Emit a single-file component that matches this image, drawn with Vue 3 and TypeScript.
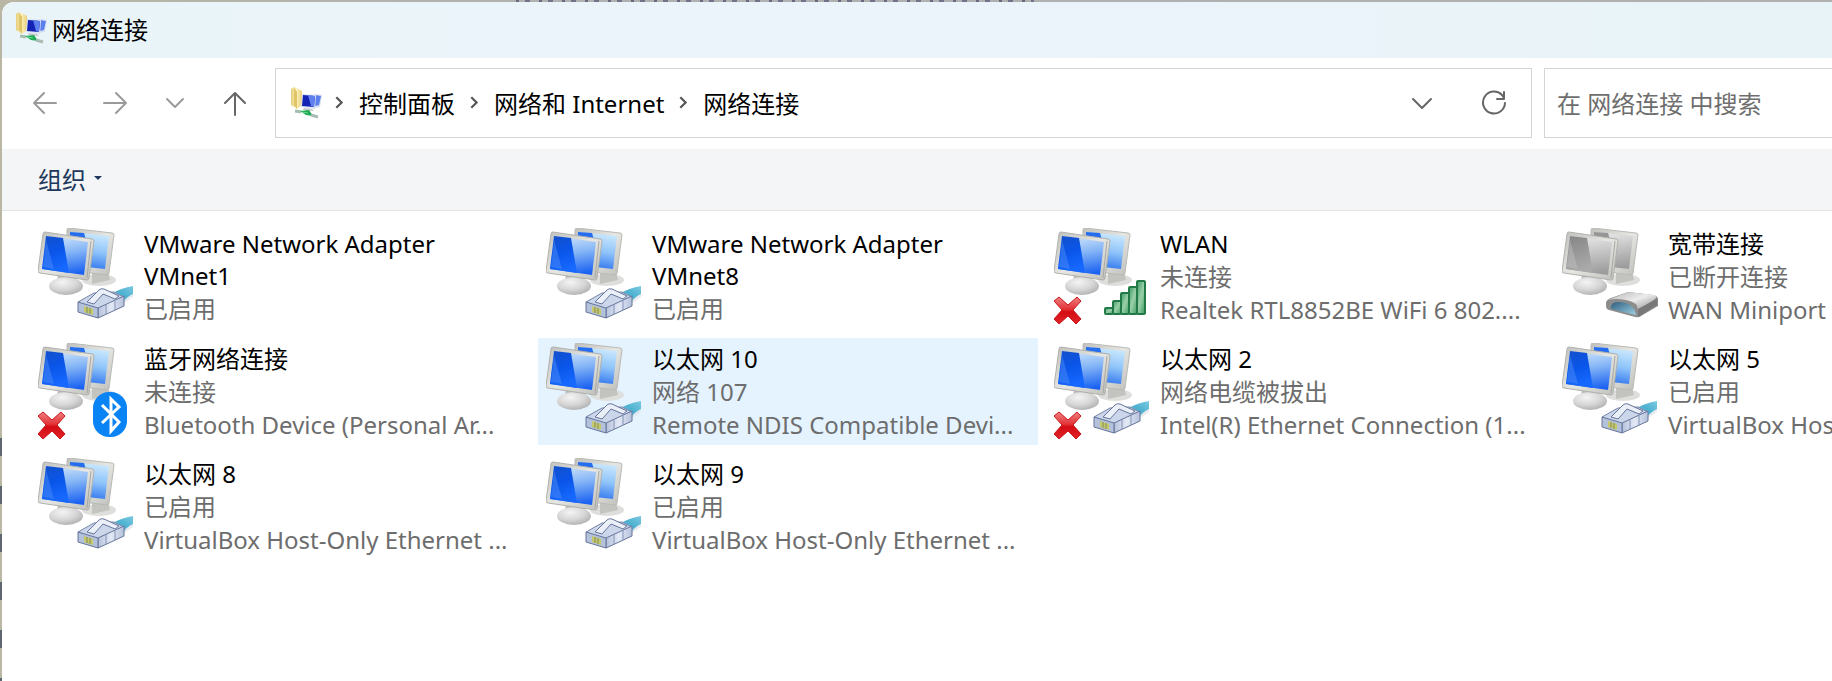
<script setup lang="ts">
type Badge = 'plug' | 'signal' | 'modem' | 'bluetooth'

interface Connection {
  name: string
  status: string
  device?: string
  badge: Badge
  down?: boolean
  grey?: boolean
  hot?: boolean
}

const crumbs: string[] = ['控制面板', '网络和 Internet', '网络连接']

const connections: Connection[] = [
  { name: 'VMware Network Adapter VMnet1', status: '已启用', badge: 'plug' },
  { name: 'VMware Network Adapter VMnet8', status: '已启用', badge: 'plug' },
  { name: 'WLAN', status: '未连接', device: 'Realtek RTL8852BE WiFi 6 802....', badge: 'signal', down: true },
  { name: '宽带连接', status: '已断开连接', device: 'WAN Miniport', badge: 'modem', grey: true },
  { name: '蓝牙网络连接', status: '未连接', device: 'Bluetooth Device (Personal Ar...', badge: 'bluetooth', down: true },
  { name: '以太网 10', status: '网络 107', device: 'Remote NDIS Compatible Devi...', badge: 'plug', hot: true },
  { name: '以太网 2', status: '网络电缆被拔出', device: 'Intel(R) Ethernet Connection (1...', badge: 'plug', down: true },
  { name: '以太网 5', status: '已启用', device: 'VirtualBox Host-Only Ethernet ...', badge: 'plug' },
  { name: '以太网 8', status: '已启用', device: 'VirtualBox Host-Only Ethernet ...', badge: 'plug' },
  { name: '以太网 9', status: '已启用', device: 'VirtualBox Host-Only Ethernet ...', badge: 'plug' },
]
</script>

<template>
  <div class="desktop">
    <svg class="defs" width="0" height="0" aria-hidden="true">
      <defs>
        <linearGradient id="blueDeep" x1="0" y1="0" x2="0.3" y2="1">
          <stop offset="0" stop-color="#1450c8" />
          <stop offset="0.5" stop-color="#0a55e8" />
          <stop offset="1" stop-color="#1668ff" />
        </linearGradient>
        <linearGradient id="blueSheen" x1="0.3" y1="0" x2="0.5" y2="1">
          <stop offset="0" stop-color="#cfe4fb" />
          <stop offset="0.45" stop-color="#86b6f6" />
          <stop offset="1" stop-color="#1c63f2" />
        </linearGradient>
        <linearGradient id="blueBack" x1="0.6" y1="0" x2="0.4" y2="1">
          <stop offset="0" stop-color="#cdeafd" />
          <stop offset="0.5" stop-color="#8fc4fa" />
          <stop offset="1" stop-color="#2f74ee" />
        </linearGradient>
        <linearGradient id="greyDeep" x1="0" y1="0" x2="0.3" y2="1">
          <stop offset="0" stop-color="#858585" />
          <stop offset="1" stop-color="#a9a9a9" />
        </linearGradient>
        <linearGradient id="greySheen" x1="0.3" y1="0" x2="0.5" y2="1">
          <stop offset="0" stop-color="#e9e9e9" />
          <stop offset="1" stop-color="#9c9c9c" />
        </linearGradient>
        <linearGradient id="bezel" x1="0" y1="0" x2="1" y2="1">
          <stop offset="0" stop-color="#bfbfbc" />
          <stop offset="0.5" stop-color="#e6e6e2" />
          <stop offset="1" stop-color="#bdbdba" />
        </linearGradient>
        <radialGradient id="foot" cx="0.4" cy="0.3" r="0.7">
          <stop offset="0" stop-color="#f4f4f4" />
          <stop offset="0.6" stop-color="#d6d6d6" />
          <stop offset="1" stop-color="#b4b4b4" />
        </radialGradient>
        <linearGradient id="cross" x1="0" y1="0" x2="0" y2="1">
          <stop offset="0" stop-color="#f08080" />
          <stop offset="0.45" stop-color="#e33338" />
          <stop offset="0.55" stop-color="#d40b12" />
          <stop offset="1" stop-color="#e0262b" />
        </linearGradient>
        <linearGradient id="bar" x1="0" y1="0" x2="1" y2="1">
          <stop offset="0" stop-color="#3f9a64" />
          <stop offset="0.5" stop-color="#9ad0a8" />
          <stop offset="1" stop-color="#3f9a60" />
        </linearGradient>
        <linearGradient id="cable" x1="0" y1="1" x2="1" y2="0">
          <stop offset="0" stop-color="#b9dcea" />
          <stop offset="0.5" stop-color="#4bb1cf" />
          <stop offset="1" stop-color="#7cc9e2" />
        </linearGradient>
        <linearGradient id="plugSide" x1="0" y1="0" x2="1" y2="0">
          <stop offset="0" stop-color="#b5c1dc" />
          <stop offset="0.5" stop-color="#e3e9f5" />
          <stop offset="1" stop-color="#b5c1dc" />
        </linearGradient>
        <linearGradient id="modemTop" x1="0" y1="0" x2="1" y2="1">
          <stop offset="0" stop-color="#b3b3b3" />
          <stop offset="0.5" stop-color="#ececec" />
          <stop offset="1" stop-color="#8a8a8a" />
        </linearGradient>
        <linearGradient id="modemGlass" x1="0" y1="0" x2="1" y2="1">
          <stop offset="0" stop-color="#2e5d7d" />
          <stop offset="1" stop-color="#9dd0e4" />
        </linearGradient>
        <linearGradient id="folder" x1="0" y1="0" x2="1" y2="0">
          <stop offset="0" stop-color="#e6cd78" />
          <stop offset="0.5" stop-color="#fbf0b8" />
          <stop offset="1" stop-color="#e9d07c" />
        </linearGradient>
        <symbol id="netFolder" viewBox="0 0 32 32">
          <path d="M1 2 4 0l8 4v14l-5 4-6-4z" fill="url(#folder)" />
          <path d="M4 1v17l3 4V5z" fill="#e0c468" />
          <path d="M24 7l8 1-2 12-6 1z" fill="#d4def5" />
          <path d="M25 8l6 1-2 9-4 1z" fill="#5b80ee" />
          <path d="M12 7l14 1-1 14-14-2z" fill="#dbe2f3" />
          <path d="M13 8l12 1-1 11-12-1z" fill="#1423b4" />
          <path d="M18 8l7 1-1 11-3-1z" fill="#5f80ee" />
          <path d="M14 21l8 1 2 2-11-1z" fill="#c7c9cd" />
          <path d="M5 24l6 1" stroke="#a4bfb0" stroke-width="3" />
          <path d="M10 24l9-1 4 6-7-1z" fill="#1fa954" />
          <path d="M12 25l6 1" stroke="#6bdc92" stroke-width="1" />
          <path d="M21 28l7 2" stroke="#a9bdb4" stroke-width="3" />
        </symbol>
      </defs>
    </svg>

    <main class="window">
      <header class="titlebar">
        <svg class="folder-icon" aria-hidden="true"><use href="#netFolder" /></svg>
        <h1>网络连接</h1>
      </header>

      <div class="navbar">
        <div class="history">
          <button type="button" class="faded" aria-label="后退">
            <svg viewBox="0 0 26 26"><path d="M24 13H2M12 3 2 13l10 10" /></svg>
          </button>
          <button type="button" class="faded" aria-label="前进">
            <svg viewBox="0 0 26 26"><path d="M2 13h22M14 3l10 10-10 10" /></svg>
          </button>
          <button type="button" class="faded" aria-label="最近浏览的位置">
            <svg viewBox="0 0 26 26"><path d="M5 9l8 8 8-8" /></svg>
          </button>
          <button type="button" aria-label="上移">
            <svg viewBox="0 0 26 26"><path d="M13 25V3M3 13 13 3l10 10" /></svg>
          </button>
        </div>

        <div class="address">
          <svg class="folder-icon" aria-hidden="true"><use href="#netFolder" /></svg>
          <nav class="crumbs" aria-label="地址">
            <template v-for="crumb in crumbs" :key="crumb">
              <svg class="sep" viewBox="0 0 10 14" aria-hidden="true"><path d="M2 2l5 5-5 5" /></svg>
              <a href="#">{{ crumb }}</a>
            </template>
          </nav>
          <button type="button" aria-label="历史记录">
            <svg viewBox="0 0 26 26"><path d="M4 9l9 9 9-9" /></svg>
          </button>
          <button type="button" aria-label="刷新">
            <svg viewBox="0 0 26 26"><path d="M24 13a11 11 0 1 1-3-8l2 3M23 2v7h-7" /></svg>
          </button>
        </div>

        <input class="search" type="search" placeholder="在 网络连接 中搜索" aria-label="在 网络连接 中搜索" />
      </div>

      <div class="toolbar">
        <button type="button">
          组织
          <svg viewBox="0 0 8 5" aria-hidden="true"><path d="M0 0h8L4 4z" /></svg>
        </button>
      </div>

      <ul class="connections">
        <li v-for="item in connections" :key="item.name">
          <button type="button" class="tile" :class="{ hot: item.hot }">
            <svg class="icon" viewBox="0 0 96 98" aria-hidden="true">
              <ellipse cx="61" cy="52" rx="17" ry="6" fill="#dededc" />
              <path d="M54 42l16 2 2 8-18 4z" fill="#c3c3c0" />
              <path d="M29 2q0-2 2-2l43 5q2 0 2 2l-5 38q0 2-2 2l-40-5z" fill="url(#bezel)" stroke="#b9b9b6" stroke-width="1" />
              <path d="M32 4l39 4-4 33-36-4z" :fill="item.grey ? 'url(#greySheen)' : 'url(#blueBack)'" />
              <path d="M32 4l14 1 6 20-20 8z" :fill="item.grey ? '#969696' : '#256df0'" />
              <path d="M20 46l18 3 3 10H18z" fill="#bcbcba" />
              <ellipse cx="28" cy="58" rx="17" ry="9" fill="url(#foot)" />
              <path d="M5 6q0-2 2-2l47 7q2 0 2 2l-5 37q0 2-2 2L2 45q-2 0-2-2z" fill="url(#bezel)" stroke="#b0b0ad" stroke-width="1" />
              <path d="M53 13l-4 37" stroke="#a8a8a5" stroke-width="1" />
              <path d="M8 8l42 6-4 33-42-6z" :fill="item.grey ? 'url(#greySheen)' : 'url(#blueSheen)'" />
              <path d="M8 8l17 2 6 35-27-4z" :fill="item.grey ? 'url(#greyDeep)' : 'url(#blueDeep)'" />
              <path d="M8 12l8 29-11-2z" :fill="item.grey ? '#bdbdbd' : '#4a8bf8'" opacity="0.5" />

              <g v-if="item.badge === 'plug'" stroke-linejoin="round">
                <path d="M76 70l19-4v3l-20 14z" fill="#dadde2" opacity="0.6" />
                <path d="M73 66q10-6 22-8v8q-5 2-10 8l-6-2z" fill="url(#cable)" />
                <path d="M40 74l16-9 20-1 10 5-26 13z" fill="#ccd6ea" stroke="#7584a8" stroke-width="1" />
                <path d="M60 80l26-12v10L60 90z" fill="url(#plugSide)" stroke="#66759a" stroke-width="1" />
                <path d="M68 77v9M77 73v9" stroke="#8494b8" stroke-width="1" />
                <path d="M40 74l20 6v10l-20-6z" fill="#b4c1da" stroke="#66759a" stroke-width="1" />
                <path d="M46 78l9 3v6l-9-3z" fill="#c6c86c" />
                <path d="M49 79v6M52 80v6" stroke="#7f8b5c" stroke-width="1" />
                <path d="M49 74l12-12q2-2 5-1l15 7-4 3-12-5-9 10z" fill="#eaeff8" stroke="#66759a" stroke-width="1" />
              </g>

              <g v-else-if="item.badge === 'signal'" fill="url(#bar)" stroke="#237a49" stroke-width="2">
                <rect x="51" y="80" width="8" height="6" rx="1" />
                <rect x="59" y="73" width="8" height="13" rx="1" />
                <rect x="67" y="65" width="8" height="21" rx="1" />
                <rect x="75" y="59" width="8" height="27" rx="1" />
                <rect x="83" y="53" width="8" height="33" rx="1" />
              </g>

              <g v-else-if="item.badge === 'modem'" transform="translate(0 -2)">
                <path d="M44 77q0-3 5-5l17-6 25 3q5 1 5 4v7l-17 10q-2 2-6 1l-26-7q-3-1-3-4z" fill="#8d8d8d" />
                <path d="M46 74l20-8 26 3q4 1 1 4L76 84q0-8-12-10-10-2-18 0z" fill="url(#modemTop)" />
                <path d="M49 83q-1-8 9-7 14 1 16 13z" fill="url(#modemGlass)" />
                <path d="M76 83v8l19-12v-6z" fill="#777" />
              </g>

              <g v-else-if="item.badge === 'bluetooth'">
                <rect x="55" y="49" width="34" height="45" rx="16" fill="#0a84f5" />
                <path d="M64 62l17 17-8 9V56l8 8-17 16" fill="none" stroke="#fff" stroke-width="3" />
              </g>

              <path v-if="item.down" d="M5 69l9 8 9-8 4 4-8 9 8 9-5 5-8-8-9 8-5-5 8-9-8-9z" fill="url(#cross)" stroke="#c9181d" stroke-width="1" stroke-linejoin="round" />
            </svg>
            <span class="text">
              <span class="name">{{ item.name }}</span>
              <span class="line">{{ item.status }}</span>
              <span v-if="item.device" class="line">{{ item.device }}</span>
            </span>
          </button>
        </li>
      </ul>
    </main>
  </div>
</template>

<style>
body {
  margin: 0;
  background: #b0b0aa;
}
</style>

<style scoped>
.desktop {
  box-sizing: border-box;
  min-height: 100vh;
  padding: 2px 0 0 2px;
  display: flex;
  overflow: hidden;
  background:
    repeating-linear-gradient(180deg, #5f6670 0 18px, transparent 18px 48px) 0 438px / 2px 100% no-repeat,
    repeating-linear-gradient(90deg, #666a7c 0 3px, transparent 3px 9px, #70748a 9px 14px, transparent 14px 23px) 516px 0 / 518px 2px no-repeat,
    linear-gradient(90deg, #b9b6a4, #b0b0b0 30%);
  font-family: "Noto Sans", "Noto Sans CJK SC", sans-serif;
  font-size: 24px;
  color: #000;
}

.defs {
  position: absolute;
}

.window {
  flex: 1;
  min-width: 0;
  overflow: hidden;
  background: #fff;
  border-top-left-radius: 12px;
}

button {
  font: inherit;
  color: inherit;
  border: 0;
  padding: 0;
  background: none;
}

.titlebar {
  box-sizing: border-box;
  display: flex;
  align-items: center;
  gap: 5px;
  height: 56px;
  padding: 0 0 4px 13px;
  background: linear-gradient(90deg, #e9f4f9, #ebf4fa 50%, #e8f3f8);
}

h1 {
  margin: 0;
  font-size: 24px;
  font-weight: 400;
}

.folder-icon {
  flex: none;
  width: 32px;
  height: 32px;
}

.navbar {
  box-sizing: border-box;
  display: flex;
  align-items: center;
  gap: 12px;
  height: 91px;
  padding-bottom: 1px;
}

.history {
  display: flex;
  gap: 34px;
  flex: none;
  margin: 0 15px 0 30px;
}

.history button:first-child {
  margin-right: 10px;
}

.history svg,
.address button svg {
  display: block;
  width: 26px;
  height: 26px;
  fill: none;
  stroke: #666;
  stroke-width: 2;
  stroke-linecap: round;
  stroke-linejoin: round;
}

.history .faded svg {
  stroke: #9a9a9a;
}

.address {
  box-sizing: border-box;
  flex: 1;
  min-width: 0;
  height: 70px;
  display: flex;
  align-items: center;
  gap: 46px;
  padding: 0 24px 0 14px;
  border: 1px solid #d4d4d4;
}

.address .folder-icon {
  margin-right: -34px;
}

.crumbs {
  flex: 1;
  display: flex;
  align-items: center;
  gap: 14px;
  padding-bottom: 2px;
  white-space: nowrap;
}

.crumbs a {
  color: #000;
  text-decoration: none;
}

.sep {
  width: 11px;
  height: 15px;
  fill: none;
  stroke: #555;
  stroke-width: 2;
}

.search {
  box-sizing: border-box;
  flex: none;
  width: 288px;
  height: 70px;
  padding: 0 12px;
  border: 1px solid #d4d4d4;
  border-right: 0;
  border-radius: 0;
  background: #fff;
  font: inherit;
  appearance: none;
}

.search::placeholder {
  color: #6e6e6e;
  opacity: 1;
}

.toolbar {
  box-sizing: border-box;
  height: 62px;
  display: flex;
  align-items: center;
  padding: 0 0 2px 36px;
  background: #f4f5f7;
  border-bottom: 1px solid #e2e3e5;
  color: #1e395b;
}

.toolbar button {
  display: flex;
  align-items: center;
  gap: 8px;
}

.toolbar svg {
  width: 8px;
  height: 5px;
  fill: #1e395b;
}

.connections {
  list-style: none;
  margin: 0;
  padding: 12px 0 12px 28px;
  display: grid;
  grid-template-columns: repeat(4, 500px);
  gap: 8px;
}

.tile {
  box-sizing: border-box;
  width: 100%;
  min-height: 107px;
  display: flex;
  align-items: flex-start;
  gap: 10px;
  padding: 5px 8px 0 8px;
  text-align: left;
}

.tile.hot {
  background: #e5f3ff;
}

.icon {
  flex: none;
  width: 96px;
  height: 98px;
}

.text {
  flex: 1;
  min-width: 0;
  display: flex;
  flex-direction: column;
}

.name {
  line-height: 32px;
}

.line {
  line-height: 33px;
  white-space: nowrap;
  color: #6d6d6d;
}
</style>
